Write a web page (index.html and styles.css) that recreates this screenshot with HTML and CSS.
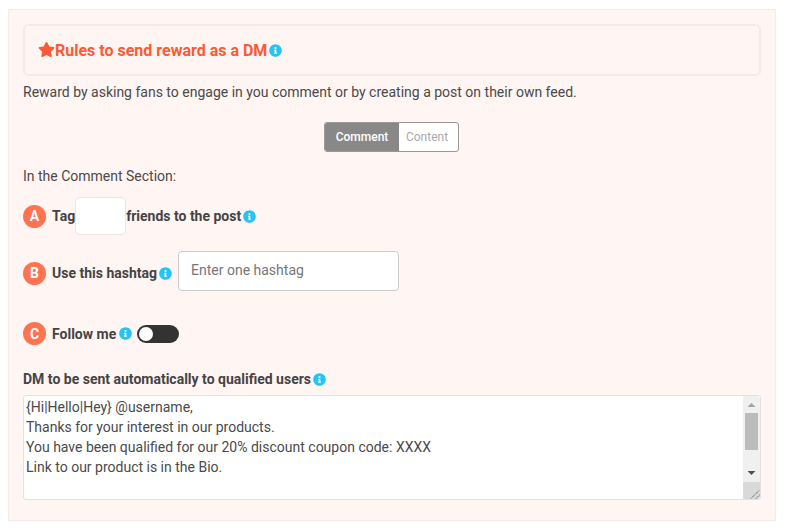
FILE: index.html
```html
<!DOCTYPE html>
<html lang="en">
<head>
<meta charset="utf-8">
<title>Rules to send reward as a DM</title>
<link rel="stylesheet" href="styles.css">
</head>
<body>
<svg class="defs" width="0" height="0" aria-hidden="true">
  <symbol id="info" viewBox="0 0 512 512">
    <path fill="#25c5f1" d="M256 8C119 8 8 119 8 256s111 248 248 248 248-111 248-248S393 8 256 8zm0 110c23 0 42 19 42 42s-19 42-42 42-42-19-42-42 19-42 42-42zm56 254c0 7-5 12-12 12h-88c-7 0-12-5-12-12v-24c0-7 5-12 12-12h12v-64h-12c-7 0-12-5-12-12v-24c0-7 5-12 12-12h64c7 0 12 5 12 12v100h12c7 0 12 5 12 12v24z"/>
  </symbol>
</svg>
<main class="panel">
  <header class="title-box">
    <svg class="star" viewBox="0 0 576 512" aria-hidden="true"><path fill="#fb5a36" d="M259 18l-65 132-146 21c-26 4-37 36-18 55l106 103-25 146c-5 26 23 46 46 34l131-69 131 69c23 12 51-8 46-34l-25-146 106-103c19-19 8-51-18-55l-146-21-65-132c-12-24-46-24-58 0z"/></svg>
    <h1 class="title">Rules to send reward as a DM</h1>
    <svg class="info"><use href="#info"/></svg>
  </header>
  <p class="intro">Reward by asking fans to engage in you comment or by creating a post on their own feed.</p>
  <div class="tabs-row">
    <div class="tabs">
      <span class="tab tab-active">Comment</span>
      <span class="tab tab-idle">Content</span>
    </div>
  </div>
  <p class="section-label">In the Comment Section:</p>
  <div class="rule rule-a">
    <span class="badge">A</span>
    <span class="rule-text">Tag</span>
    <input class="count" type="text" aria-label="Number of friends">
    <span class="rule-text">friends to the post</span>
    <svg class="info"><use href="#info"/></svg>
  </div>
  <div class="rule rule-b">
    <span class="badge">B</span>
    <span class="rule-text">Use this hashtag</span>
    <svg class="info"><use href="#info"/></svg>
    <input class="hashtag" type="text" placeholder="Enter one hashtag">
  </div>
  <div class="rule rule-c">
    <span class="badge">C</span>
    <span class="rule-text">Follow me</span>
    <svg class="info"><use href="#info"/></svg>
    <span class="switch"><span class="knob"></span></span>
  </div>
  <div class="dm-label">
    <span class="rule-text">DM to be sent automatically to qualified users</span>
    <svg class="info"><use href="#info"/></svg>
  </div>
  <div class="message-wrap">
    <textarea class="message" aria-label="DM message">{Hi|Hello|Hey} @username,
Thanks for your interest in our products.
You have been qualified for our 20% discount coupon code: XXXX
Link to our product is in the Bio.</textarea>
    <div class="scrollbar" aria-hidden="true">
      <span class="sb-button">
        <svg width="17" height="17" viewBox="0 0 17 17"><path fill="#a3a3a3" d="M4.5 11h8l-4-4z"/></svg>
      </span>
      <span class="sb-track"><span class="sb-thumb"></span></span>
      <span class="sb-button">
        <svg width="17" height="17" viewBox="0 0 17 17"><path fill="#505050" d="M4.5 6h8l-4 4z"/></svg>
      </span>
      <span class="sb-resizer">
        <svg width="17" height="17" viewBox="0 0 17 17"><path fill="none" stroke="#555" stroke-dasharray="1.2 0.8" d="M8 16.5l8.5-8.5M13 16.5l3.5-3.5"/></svg>
      </span>
    </div>
  </div>
</main>
</body>
</html>
```
FILE: styles.css
```css
* { box-sizing: border-box; }
html, body { margin: 0; padding: 0; background: #fff; }
body {
  padding: 9px 11px 10px 8px;
  font-family: Roboto, "Liberation Sans", sans-serif;
  font-size: 14px;
  color: #4a4a4a;
}
.defs { position: absolute; }
.panel {
  width: 768px;
  height: 512px;
  padding: 14px 14px 20px 14px;
  background: #fff5f3;
  border: 1px solid #f8e9e6;
}
.title-box {
  display: flex;
  align-items: center;
  width: 738px;
  height: 52px;
  padding: 0 13px;
  border: 2px solid #f6e9e7;
  border-radius: 5px;
}
.star { width: 17px; height: 15px; flex: none; margin-top: -1px; }
.title {
  margin: 2px 2px 0 0;
  font-size: 16px;
  font-weight: 700;
  line-height: 20px;
  color: #fb5a36;
}
.info { width: 13px; height: 13px; flex: none; }
.intro { margin: 7px 0 0; line-height: 18px; }
.tabs-row { display: flex; justify-content: center; margin-top: 21px; padding-right: 1px; }
.tabs {
  display: flex;
  width: 135px;
  height: 30px;
  border: 1px solid #999;
  border-radius: 3px;
  background: #fff;
  overflow: hidden;
  font-size: 12px;
}
.tab { display: flex; align-items: center; justify-content: center; flex: 1; color: #aaa; }
.tab-idle { padding-right: 3px; }
.tab-active { flex: none; width: 74px; background: #888; color: #fff; font-weight: 500; }
.section-label { margin: 15px 0 0; line-height: 18px; }
.rule { display: flex; align-items: center; }
.rule-text { font-weight: 700; color: #444; }
.rule .info { margin-left: 2px; }
.badge {
  display: flex;
  align-items: center;
  justify-content: center;
  width: 23px;
  height: 23px;
  margin-right: 6px;
  border-radius: 50%;
  background: #ff7350;
  color: #fff;
  font-size: 14px;
  font-weight: 700;
}
.rule-a { margin-top: 12px; }
.count {
  width: 51px;
  height: 38px;
  padding: 0;
  background: #fff;
  border: 1px solid #ebe6e5;
  border-radius: 5px;
}
.rule-b { margin-top: 16px; }
.hashtag {
  width: 221px;
  height: 40px;
  margin: 0 0 4px 6px;
  padding: 0 12px 2px;
  background: #fff;
  border: 1px solid #ccc;
  border-radius: 4px;
  font: 14px Roboto, sans-serif;
  color: #444;
}
.hashtag::placeholder { color: #777; opacity: 1; }
.rule-c { margin-top: 27px; }
.rule-c .info { margin-left: 3px; }
.switch {
  position: relative;
  display: block;
  width: 42px;
  height: 18px;
  margin-left: 5px;
  border-radius: 9px;
  background: #333;
}
.knob {
  position: absolute;
  left: 2px;
  top: 2px;
  width: 14px;
  height: 14px;
  border-radius: 50%;
  background: #fff;
}
.dm-label { display: flex; align-items: center; margin-top: 26px; }
.dm-label .info { margin-left: 2px; }
.message-wrap {
  position: relative;
  width: 738px;
  height: 105px;
  margin-top: 8px;
}
.message {
  display: block;
  width: 100%;
  height: 100%;
  padding: 1px 19px 2px 2px;
  border: 1px solid #e6e1e0;
  border-radius: 3px;
  background: #fff;
  font: 14px/20px Roboto, sans-serif;
  color: #4a4a4a;
  resize: none;
  overflow: hidden;
}
.scrollbar {
  position: absolute;
  top: 1px;
  right: 1px;
  bottom: 1px;
  display: flex;
  flex-direction: column;
  width: 17px;
  background: #f0f0f0;
  border-radius: 0 2px 2px 0;
  overflow: hidden;
}
.sb-button { display: block; height: 17px; flex: none; }
.sb-button svg, .sb-resizer svg { display: block; }
.sb-track { display: block; flex: 1; }
.sb-thumb { display: block; width: 13px; height: 37px; margin: 0 2px; background: #bcbcbc; }
.sb-resizer { display: block; height: 17px; flex: none; background: #d9d9d9; }
```
